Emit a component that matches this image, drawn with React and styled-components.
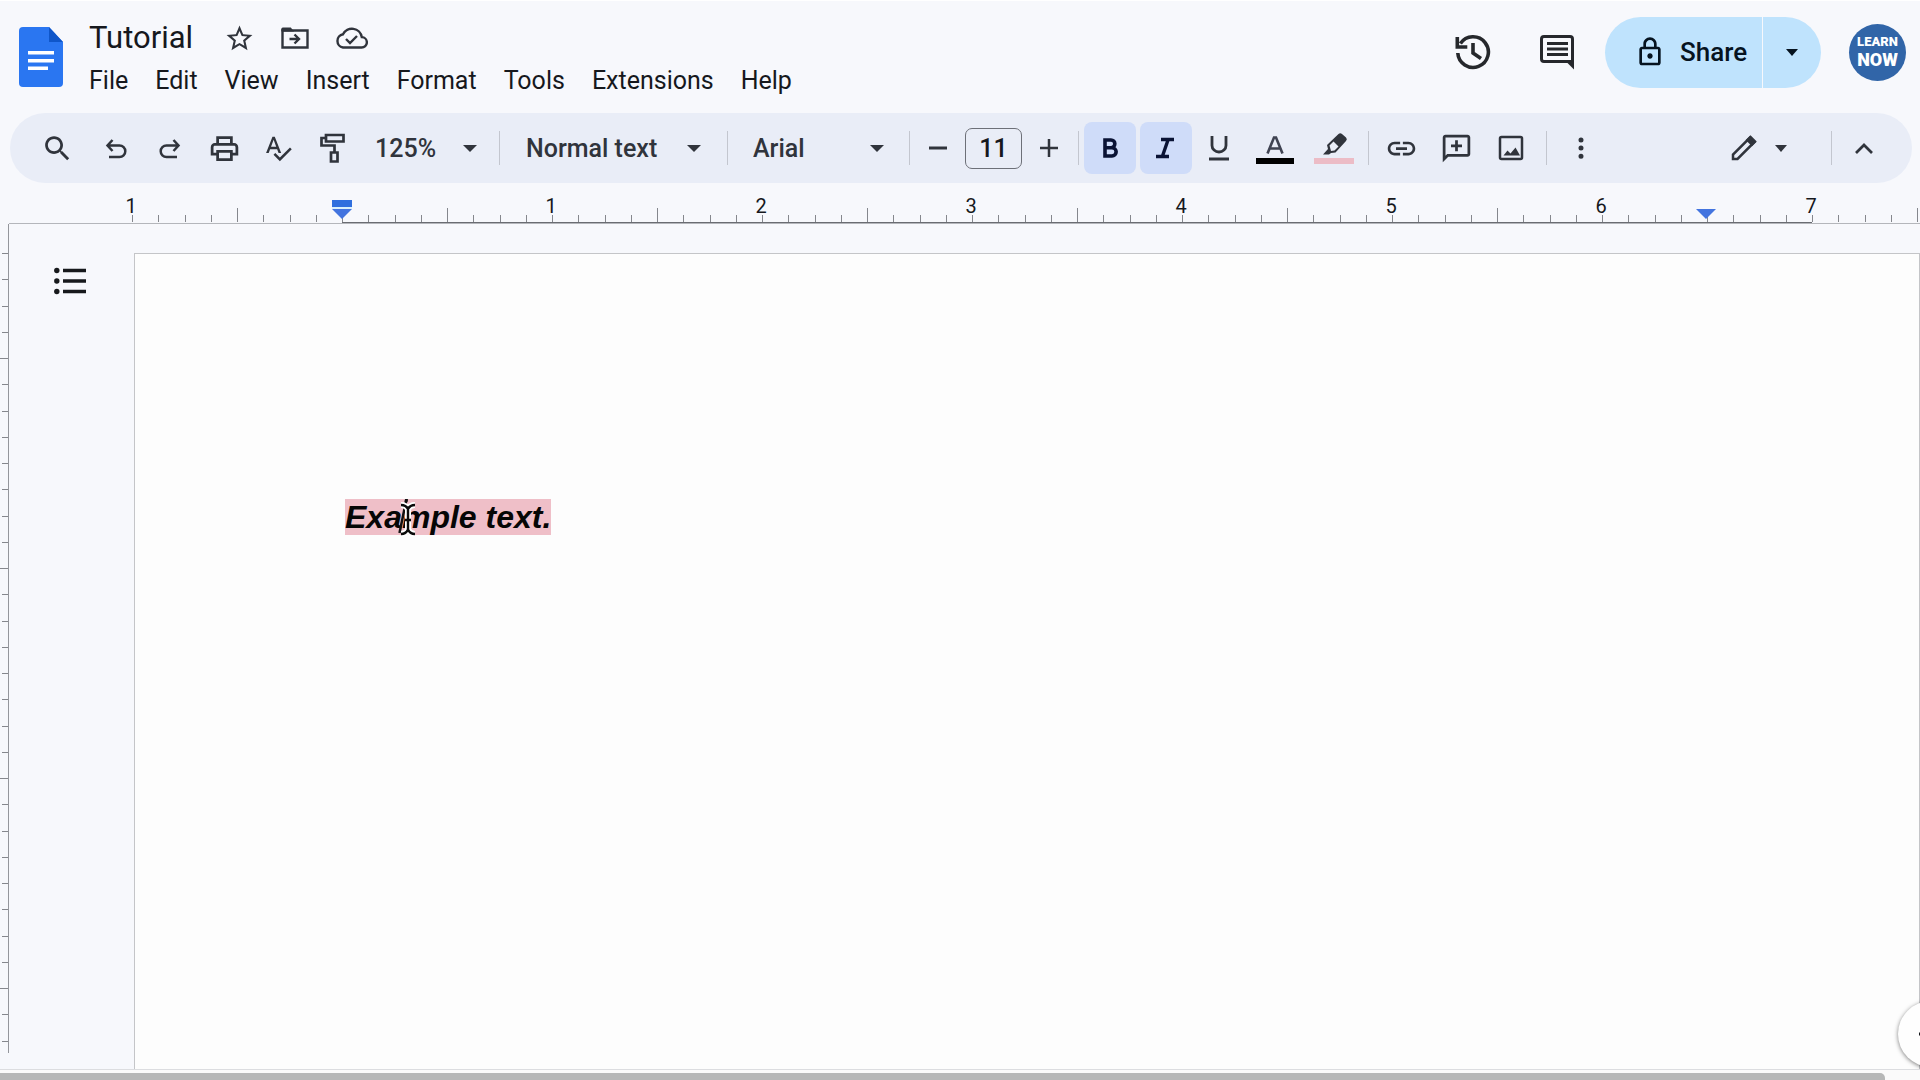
import React from 'react';
import styled, { createGlobalStyle, css } from 'styled-components';

const ink = '#30343c';
const uiFont = "Roboto, 'Noto Sans', sans-serif";

const GlobalStyle = createGlobalStyle`
  *, *::before, *::after { box-sizing: border-box; }
  html, body { margin: 0; height: 100%; background: #f7f8fc; }
  body { font-family: ${uiFont}; color: #16181d; overflow: hidden; }
  button, input, select { font: inherit; color: inherit; }
`;

const Screen = styled.div`
  display: flex;
  flex-direction: column;
  height: 100vh;
  border-top: 1px solid #fff;
  overflow: hidden;
`;

/* ---------- header ---------- */

const Header = styled.header`
  display: flex;
  justify-content: space-between;
  height: 112px;
  padding: 0 14px 0 19px;
`;

const Brand = styled.div`
  display: flex;
  gap: 26px;
`;

const LogoLink = styled.a`
  display: block;
  height: 60px;
  margin-top: 26px;
`;

const TitleColumn = styled.div`
  display: flex;
  flex-direction: column;
  padding-top: 16px;
`;

const TitleRow = styled.div`
  display: flex;
  align-items: center;
  height: 42px;
`;

const TitleInput = styled.input`
  width: 122px;
  padding: 0;
  border: 0;
  background: none;
  outline: none;
  font-size: 31px;
  line-height: 40px;
`;

const PlainButton = styled.button`
  display: flex;
  align-items: center;
  justify-content: center;
  flex: none;
  padding: 0;
  border: 0;
  background: none;
  cursor: pointer;
`;

const TitleButton = styled(PlainButton)`
  width: 56px;
  height: 40px;
  color: ${ink};
`;

const MenuBar = styled.nav`
  display: flex;
  gap: 27px;
  height: 44px;
`;

const MenuButton = styled(PlainButton)`
  font-size: 25px;
  line-height: 44px;
`;

const HeaderActions = styled.div`
  display: flex;
  align-items: center;
  height: 102px;
`;

const HeaderIconButton = styled(PlainButton)`
  width: 84px;
  height: 70px;
  color: #26282c;
`;

const ShareGroup = styled.div`
  display: flex;
  gap: 1px;
  height: 71px;
  margin: 0 28px 0 6px;
`;

const ShareButton = styled(PlainButton)`
  justify-content: flex-start;
  gap: 14px;
  width: 157px;
  padding-left: 29px;
  border-radius: 36px 0 0 36px;
  background: #bfe3fd;
  color: #06131f;
  font-size: 26px;
  font-weight: 500;
`;

const ShareMenuButton = styled(PlainButton)`
  width: 58px;
  border-radius: 0 36px 36px 0;
  background: #bfe3fd;
  color: #06131f;
`;

const Avatar = styled(PlainButton)`
  flex-direction: column;
  width: 57px;
  height: 57px;
  border-radius: 50%;
  background: #3165a8;
  color: #fff;
  font-weight: 900;
`;

const AvatarLine = styled.span`
  font-size: ${(p) => (p.$large ? 18 : 13)}px;
  line-height: ${(p) => (p.$large ? 20 : 16)}px;
`;

/* ---------- toolbar ---------- */

const Toolbar = styled.div`
  display: flex;
  align-items: center;
  flex: none;
  height: 70px;
  margin: 0 8px 0 10px;
  padding: 0 21px 0 20px;
  border-radius: 35px;
  background: #e9edf7;
  color: ${ink};
`;

const ToolGroup = styled.div`
  display: flex;
  align-items: center;
  gap: ${(p) => p.$gap || 0}px;
  padding: ${(p) => p.$pad || 0};
`;

const ToolButton = styled(PlainButton)`
  width: ${(p) => p.$width || 54}px;
  height: 52px;
  border-radius: 8px;
  ${(p) =>
    p.$active &&
    css`
      background: #cfdcf9;
      color: #0a1335;
    `}
`;

const Divider = styled.span`
  flex: none;
  width: 1px;
  height: 34px;
  background: #c3c6cf;
`;

const SelectBox = styled.label`
  display: grid;
  grid-template-columns: 1fr auto;
  align-items: center;
  width: ${(p) => p.$width}px;
  padding: ${(p) => p.$pad || '0 26px'};
`;

const SelectControl = styled.select`
  grid-area: 1 / 1 / 2 / 3;
  width: 100%;
  height: 40px;
  padding: 0;
  border: 0;
  background: none;
  outline: none;
  appearance: none;
  font-size: 25px;
  font-weight: 500;
`;

const SelectCaret = styled.span`
  display: flex;
  grid-area: 1 / 2 / 2 / 3;
  pointer-events: none;
`;

const SizeInput = styled.input`
  width: 57px;
  height: 41px;
  padding: 0;
  border: 1px solid #6d7078;
  border-radius: 7px;
  background: none;
  color: #16181d;
  font-size: 25px;
  font-weight: 500;
  text-align: center;
  outline: none;
`;

const ToolbarEnd = styled.div`
  display: flex;
  align-items: center;
  margin-left: auto;
`;

const ModeButton = styled(PlainButton)`
  gap: 17px;
  height: 52px;
  margin-right: 44px;
`;

/* ---------- rulers ---------- */

const HorizontalRuler = styled.div`
  display: flex;
  flex: none;
  height: 41px;
  margin-left: 9px;
  padding-left: 123px;
  border-bottom: 1px solid #b4b6bb;
  overflow: hidden;
`;

const RulerInch = styled.div`
  position: relative;
  display: grid;
  grid-template-columns: repeat(8, 1fr);
  grid-template-rows: 14px minmax(0, 1fr);
  flex: none;
  align-items: end;
  width: 210px;
  height: 40px;
  padding-top: 16px;
  border-bottom: 1px solid ${(p) => (p.$margin ? 'transparent' : '#6a6c72')};
`;

const RulerNumber = styled.span`
  grid-column: 1 / -1;
  width: 20px;
  margin-left: -11px;
  font-size: 20px;
  line-height: 14px;
  text-align: center;
`;

const Tick = styled.i`
  grid-row: 2;
  width: 1px;
  height: ${(p) => (p.$tall ? 14 : 7)}px;
  background: #85878d;
`;

const IndentMarker = styled.span`
  position: absolute;
  bottom: 3px;
  left: ${(p) => (p.$half ? 'calc(50% - 11px)' : '-10px')};
  display: flex;
`;

const Workspace = styled.main`
  position: relative;
  display: flex;
  flex: 1;
  min-height: 0;
  overflow: hidden;
`;

const VerticalRuler = styled.div`
  display: flex;
  flex-direction: column;
  flex: none;
  width: 9px;
  margin-bottom: 16px;
  padding-top: 29px;
  border-right: 1px solid #94969c;
  overflow: hidden;
`;

const VerticalInch = styled.div`
  display: grid;
  grid-template-rows: repeat(8, 1fr);
  justify-items: end;
  flex: none;
  height: 210px;
`;

const SideTick = styled.i`
  width: ${(p) => (p.$tall ? 9 : 7)}px;
  height: 1px;
  background: #85878d;
`;

/* ---------- document ---------- */

const OutlineRail = styled.aside`
  display: flex;
  justify-content: center;
  align-items: flex-start;
  flex: none;
  width: 125px;
  padding: 37px 3px 0 0;
`;

const OutlineButton = styled(PlainButton)`
  width: 52px;
  height: 40px;
`;

const Page = styled.article`
  flex: 1;
  margin-top: 29px;
  padding: 245px 210px 0;
  border: 1px solid #c4c5c8;
  border-bottom: 0;
  background: #fdfdfd;
`;

const Paragraph = styled.p`
  margin: 0;
  font: italic 700 32px/37px 'Liberation Sans', Arial, sans-serif;
  color: #060606;
`;

const Highlight = styled.mark`
  position: relative;
  background: #efbfc8;
  color: inherit;
`;

const PointerOverlay = styled.span`
  position: absolute;
  top: 0;
  left: 50px;
  display: flex;
`;

const ExploreButton = styled(PlainButton)`
  position: absolute;
  right: -44px;
  bottom: 2px;
  width: 66px;
  height: 66px;
  border-radius: 50%;
  background: #fefefe;
  box-shadow: 0 1px 4px rgba(0, 0, 0, 0.5);
`;

const ScrollTrack = styled.div`
  flex: none;
  height: 11px;
  padding: 3px 35px 0 0;
  border-top: 1px solid #dcdde0;
  background: #fafafa;
  overflow: hidden;
`;

const ScrollThumb = styled.div`
  height: 12px;
  border-radius: 0 5px 0 0;
  background: #b6b7b7;
`;

/* ---------- drawings ---------- */

const icons = {
  star: 'M22 9.24l-7.19-.62L12 2 9.19 8.63 2 9.24l5.46 4.73L5.82 21 12 17.27 18.18 21l-1.63-7.03L22 9.24zM12 15.4l-3.76 2.27 1-4.28-3.32-2.88 4.38-.38L12 6.1l1.71 4.04 4.38.38-3.32 2.88 1 4.28L12 15.4z',
  search: 'M15.5 14h-.79l-.28-.27C15.41 12.59 16 11.11 16 9.5 16 5.91 13.09 3 9.5 3S3 5.91 3 9.5 5.91 16 9.5 16c1.61 0 3.09-.59 4.23-1.57l.28.28v.79l5 4.99L20.49 19l-4.99-5zm-6 0C7.01 14 5 11.99 5 9.5S7.01 5 9.5 5 14 7.01 14 9.5 11.99 14 9.5 14z',
  print: 'M19 8h-1V3H6v5H5c-1.66 0-3 1.34-3 3v6h4v4h12v-4h4v-6c0-1.66-1.34-3-3-3zM8 5h8v3H8V5zm8 12v2H8v-4h8v2zm2-2v-2H6v2H4v-4c0-.55.45-1 1-1h14c.55 0 1 .45 1 1v4h-2z',
  spell: 'M12.45 16h2.09L9.43 3H7.57L2.46 16h2.09l1.12-3h5.64l1.14 3zm-6.02-5L8.5 5.48 10.57 11H6.43zm15.16.59l-8.09 8.09L9.83 16l-1.41 1.41 5.09 5.09L23 13l-1.41-1.41z',
  link: 'M3.9 12c0-1.71 1.39-3.1 3.1-3.1h4V7H7c-2.76 0-5 2.24-5 5s2.24 5 5 5h4v-1.9H7c-1.71 0-3.1-1.39-3.1-3.1zM8 13h8v-2H8v2zm9-6h-4v1.9h4c1.71 0 3.1 1.39 3.1 3.1s-1.39 3.1-3.1 3.1h-4V17h4c2.76 0 5-2.24 5-5s-2.24-5-5-5z',
  addComment: 'M20 2H4c-1.1 0-2 .9-2 2v18l4-4h14c1.1 0 2-.9 2-2V4c0-1.1-.9-2-2-2zm0 14H5.2L4 17.2V4h16v12zm-9-2h2v-3h3V9h-3V6h-2v3H8v2h3v3z',
  more: 'M12 7.5a2 2 0 1 0 0-4 2 2 0 0 0 0 4zm0 6.5a2 2 0 1 0 0-4 2 2 0 0 0 0 4zm0 6.5a2 2 0 1 0 0-4 2 2 0 0 0 0 4z',
  lock: 'M18 8h-1V6c0-2.76-2.24-5-5-5S7 3.24 7 6v2H6c-1.1 0-2 .9-2 2v10c0 1.1.9 2 2 2h12c1.1 0 2-.9 2-2V10c0-1.1-.9-2-2-2zM9 6c0-1.66 1.34-3 3-3s3 1.34 3 3v2H9V6zm9 14H6V10h12v10zm-6-3c1.1 0 2-.9 2-2s-.9-2-2-2-2 .9-2 2 .9 2 2 2z',
};

function Icon({ name, size }) {
  return (
    <svg width={size} height={size} viewBox="0 0 24 24" fill="currentColor" aria-hidden="true">
      <path d={icons[name]} />
    </svg>
  );
}

function Line({ size = 30, width = 2.5, children }) {
  return (
    <svg width={size} height={size} viewBox={`0 0 ${size} ${size}`} fill="none" stroke="currentColor" strokeWidth={width} aria-hidden="true">
      {children}
    </svg>
  );
}

const Caret = ({ width = 14 }) => (
  <svg width={width} height="7" viewBox="0 0 14 7" preserveAspectRatio="none" fill="currentColor" aria-hidden="true">
    <path d="M0 0h14L7 7z" />
  </svg>
);

const DocsLogo = () => (
  <svg width="44" height="60" viewBox="0 0 44 60" aria-hidden="true">
    <path d="M4 0h26l14 15v41a4 4 0 0 1-4 4H4a4 4 0 0 1-4-4V4a4 4 0 0 1 4-4z" fill="#2a76f1" />
    <path d="M30 0l14 15H30z" fill="#0f56c9" />
    <path d="M9 24h26v3.5H9zM9 32h26v3.5H9zM9 39.5h20V43H9z" fill="#fff" />
  </svg>
);

const FolderMoveIcon = () => (
  <Line size={30} width={2.4}>
    <path d="M2.5 7.500v17h25v-17z" />
    <path d="M1.300 8.500V6q0-1.500 1.500-1.500h8l3.200 4z" fill="currentColor" stroke="none" />
    <path d="M9.500 16h8.500M14.500 11.500l4.500 4.500-4.500 4.500" />
  </Line>
);

const CloudIcon = () => (
  <Line size={34} width={2.4}>
    <path d="M9 26.500h18.500a5.200 5.200 0 0 0 .300-10.400A10 10 0 0 0 9 13.300 6.700 6.700 0 0 0 9 26.500z" />
    <path d="M12 18l4 4 7-7" />
  </Line>
);

const HistoryIcon = () => (
  <Line size={36} width={3.6}>
    <path d="M2.8 19a15.3 15.3 0 1 0 2.6-9.5" />
    <path d="M2.3 3v10h10" />
    <path d="M18 9v10l8 5.5" />
  </Line>
);

const CommentIcon = () => (
  <Line size={36} width={3}>
    <path d="M2.500 5q0-2.500 2.500-2.500h26q2.500 0 2.500 2.500v22.500h-28.500q-2.500 0-2.500-2.500z" />
    <path d="M35 27v8.500l-8-8z" fill="currentColor" stroke="none" />
    <path d="M8 9.500h21M8 15h21M8 20.500h21" />
  </Line>
);

const UndoIcon = ({ flip }) => (
  <Line size={24} width={2.5}>
    <g transform={flip ? 'translate(24 0) scale(-1 1)' : undefined}>
      <path d="M8.5 4L3.500 9.500l5 5.500M4 9.500h11.500a5.800 5.800 0 0 1 0 11.600H5" />
    </g>
  </Line>
);

const PaintIcon = () => (
  <Line size={32} width={2.7}>
    <path d="M10 3h17.500v6.500H10zM10 6H5.500v7.500h13V20M15 20.500h6.500v9H15z" />
  </Line>
);

const ImageIcon = () => (
  <Line size={28} width={2.5}>
    <rect x="3" y="3" width="22" height="22" rx="1.500" />
    <path d="M6.500 21.500l4-5 3 3 5-6 4.500 8z" fill="currentColor" stroke="none" />
  </Line>
);

const BoldIcon = () => (
  <Line size={24} width={3.6}>
    <path d="M7 4h6a3.8 3.8 0 0 1 0 7.7H7zM7 11.7h7a4.1 4.1 0 0 1 0 8.300H7z" />
  </Line>
);

const ItalicIcon = () => (
  <Line size={24} width={3.4}>
    <path d="M7 3.500h13M2 20.500h13M14 4L8.500 20" />
  </Line>
);

const UnderlineIcon = () => (
  <Line size={26} width={2.8}>
    <path d="M6 1v9.500a7 6.500 0 0 0 14 0V1M3 24h20" />
  </Line>
);

const TextColorIcon = () => (
  <svg width="38" height="32" viewBox="0 0 38 32" aria-hidden="true">
    <path d="M11.5 21.500L18 5.500h2L26.500 21.500M14 16.500h10" fill="none" stroke="#3f4352" strokeWidth="2.600" />
    <path d="M0 26h38v6H0z" fill="#000" />
  </svg>
);

const HighlightIcon = () => (
  <svg width="40" height="32" viewBox="0 0 40 32" aria-hidden="true">
    <path d="M9 22.500l5-5.500-1-4L24.500 2a2.500 2.500 0 0 1 3.500 0l4 3.500a2.500 2.500 0 0 1 0 3.500L21.500 20.500l-4.500.500-2 1.500z" fill={ink} />
    <path d="M15.500 13.500l4-4 5 5-4 4-3.500.500z" fill="#e9edf7" />
    <path d="M0 26h40v6H0z" fill="#ecbcc6" />
  </svg>
);

const PencilIcon = () => (
  <Line size={28} width={2.5}>
    <path d="M3 25v-4.500L20 3.500l4.500 4.500-17 17z" />
    <path d="M17.500 6l4.500 4.500 3-3L20.500 3z" fill="currentColor" />
  </Line>
);

const ListIcon = () => (
  <svg width="32" height="28" viewBox="0 0 32 28" fill="#17191c" aria-hidden="true">
    <circle cx="2.8" cy="3.500" r="2.700" />
    <circle cx="2.800" cy="14" r="2.700" />
    <circle cx="2.800" cy="24.500" r="2.700" />
    <path d="M9 1.800h23v3.500H9zM9 12.300h23v3.500H9zM9 22.800h23v3.500H9z" />
  </svg>
);

const TextPointer = () => (
  <svg width="26" height="38" viewBox="0 0 26 38" fill="none" aria-hidden="true">
    <path d="M11.500 0L4.500 34" stroke="#111" strokeWidth="2.500" />
    <path d="M6 6q5 0 7 4q2-4 7-4M13 10v20M6 35q5 0 7-4.500q2 4.500 7 4.500M10 21h6" stroke="#fff" strokeWidth="6" />
    <path d="M6 6q5 0 7 4q2-4 7-4M13 10v20M6 35q5 0 7-4.500q2 4.500 7 4.500M10 21h6" stroke="#0b0b0b" strokeWidth="2.400" />
    <path d="M11.500 0L11 3" stroke="#111" strokeWidth="3" />
  </svg>
);

const LeftIndent = () => (
  <svg width="20" height="19" viewBox="0 0 20 19" aria-hidden="true">
    <path d="M0 0h20v7H0z" fill="#2f6fde" />
    <path d="M0 7h20v2H0z" fill="#d9f0fc" />
    <path d="M0 9h20L10 19z" fill="#4374df" />
  </svg>
);

const RightIndent = () => (
  <svg width="20" height="10" viewBox="0 0 20 10" aria-hidden="true">
    <path d="M0 0h20L10 10z" fill="#4374df" />
  </svg>
);

/* ---------- page ---------- */

const menus = ['File', 'Edit', 'View', 'Insert', 'Format', 'Tools', 'Extensions', 'Help'];
const eighths = [0, 1, 2, 3, 4, 5, 6, 7];
const inches = [
  { label: '1', margin: true },
  { label: '', marker: 'left' },
  { label: '1' },
  { label: '2' },
  { label: '3' },
  { label: '4' },
  { label: '5' },
  { label: '6', marker: 'right' },
  { label: '7', margin: true },
];

function Select({ label, width, pad, value }) {
  return (
    <SelectBox $width={width} $pad={pad}>
      <SelectControl aria-label={label} defaultValue={value}>
        <option>{value}</option>
      </SelectControl>
      <SelectCaret>
        <Caret />
      </SelectCaret>
    </SelectBox>
  );
}

export default function App() {
  return (
    <>
      <GlobalStyle />
      <Screen>
        <Header>
          <Brand>
            <LogoLink href="#" aria-label="Docs home">
              <DocsLogo />
            </LogoLink>
            <TitleColumn>
              <TitleRow>
                <TitleInput aria-label="Document title" defaultValue="Tutorial" />
                <TitleButton aria-label="Star"><Icon name="star" size={31} /></TitleButton>
                <TitleButton aria-label="Move"><FolderMoveIcon /></TitleButton>
                <TitleButton aria-label="Saved to cloud"><CloudIcon /></TitleButton>
              </TitleRow>
              <MenuBar>
                {menus.map((m) => (
                  <MenuButton key={m}>{m}</MenuButton>
                ))}
              </MenuBar>
            </TitleColumn>
          </Brand>
          <HeaderActions>
            <HeaderIconButton aria-label="Version history"><HistoryIcon /></HeaderIconButton>
            <HeaderIconButton aria-label="Comments"><CommentIcon /></HeaderIconButton>
            <ShareGroup>
              <ShareButton>
                <Icon name="lock" size={32} />
                Share
              </ShareButton>
              <ShareMenuButton aria-label="Share options"><Caret width={12} /></ShareMenuButton>
            </ShareGroup>
            <Avatar aria-label="Account">
              <AvatarLine>LEARN</AvatarLine>
              <AvatarLine $large>NOW</AvatarLine>
            </Avatar>
          </HeaderActions>
        </Header>

        <Toolbar role="toolbar">
          <ToolGroup $pad="0 5px 0 0">
            <ToolButton aria-label="Search menus"><Icon name="search" size={33} /></ToolButton>
          </ToolGroup>
          <ToolGroup>
            <ToolButton aria-label="Undo"><UndoIcon /></ToolButton>
            <ToolButton aria-label="Redo"><UndoIcon flip /></ToolButton>
            <ToolButton aria-label="Print"><Icon name="print" size={33} /></ToolButton>
            <ToolButton aria-label="Spelling check"><Icon name="spell" size={30} /></ToolButton>
            <ToolButton aria-label="Paint format"><PaintIcon /></ToolButton>
          </ToolGroup>
          <Select label="Zoom" width={140} pad="0 22px 0 16px" value="125%" />
          <Divider />
          <Select label="Styles" width={227} value="Normal text" />
          <Divider />
          <Select label="Font" width={181} pad="0 25px" value="Arial" />
          <Divider />
          <ToolGroup $pad="0 2px 0 1px">
            <ToolButton aria-label="Decrease font size"><Line size={18} width={3}><path d="M0 9h18" /></Line></ToolButton>
            <SizeInput aria-label="Font size" defaultValue="11" />
            <ToolButton aria-label="Increase font size"><Line size={18} width={2.5}><path d="M0 9h18M9 0v18" /></Line></ToolButton>
          </ToolGroup>
          <Divider />
          <ToolGroup $gap={4} $pad="0 8px 0 5px">
            <ToolButton $width={52} $active aria-pressed="true" aria-label="Bold"><BoldIcon /></ToolButton>
            <ToolButton $width={52} $active aria-pressed="true" aria-label="Italic"><ItalicIcon /></ToolButton>
            <ToolButton $width={46} aria-label="Underline"><UnderlineIcon /></ToolButton>
            <ToolButton $width={58} aria-label="Text color"><TextColorIcon /></ToolButton>
            <ToolButton $width={52} aria-label="Highlight color"><HighlightIcon /></ToolButton>
          </ToolGroup>
          <Divider />
          <ToolGroup $gap={1} $pad="0 8px 0 5px">
            <ToolButton aria-label="Insert link"><Icon name="link" size={33} /></ToolButton>
            <ToolButton aria-label="Add comment"><Icon name="addComment" size={33} /></ToolButton>
            <ToolButton aria-label="Insert image"><ImageIcon /></ToolButton>
          </ToolGroup>
          <Divider />
          <ToolGroup $pad="0 0 0 7px">
            <ToolButton aria-label="More"><Icon name="more" size={30} /></ToolButton>
          </ToolGroup>
          <ToolbarEnd>
            <ModeButton aria-label="Editing mode">
              <PencilIcon />
              <Caret width={12} />
            </ModeButton>
            <Divider />
            <ToolGroup $pad="0 0 0 5px">
              <ToolButton aria-label="Hide the menus"><Line size={18} width={2.7}><path d="M1 14l8-8 8 8" /></Line></ToolButton>
            </ToolGroup>
          </ToolbarEnd>
        </Toolbar>

        <HorizontalRuler>
          {inches.map((inch, n) => (
            <RulerInch key={n} $margin={inch.margin}>
              <RulerNumber>{inch.label}</RulerNumber>
              {eighths.map((e) => (
                <Tick key={e} $tall={e === 4 && inch.marker !== 'right'} />
              ))}
              {inch.marker === 'left' && <IndentMarker><LeftIndent /></IndentMarker>}
              {inch.marker === 'right' && <IndentMarker $half><RightIndent /></IndentMarker>}
            </RulerInch>
          ))}
        </HorizontalRuler>

        <Workspace>
          <VerticalRuler>
            {[0, 1, 2, 3].map((n) => (
              <VerticalInch key={n}>
                {eighths.map((e) => (
                  <SideTick key={e} $tall={e === 4} />
                ))}
              </VerticalInch>
            ))}
          </VerticalRuler>
          <OutlineRail>
            <OutlineButton aria-label="Show outline"><ListIcon /></OutlineButton>
          </OutlineRail>
          <Page>
            <Paragraph>
              <Highlight>
                Example text.
                <PointerOverlay><TextPointer /></PointerOverlay>
              </Highlight>
            </Paragraph>
          </Page>
          <ExploreButton aria-label="Explore">
            <Line size={24} width={3}><path d="M0 12h24M12 0v24" /></Line>
          </ExploreButton>
        </Workspace>
        <ScrollTrack>
          <ScrollThumb />
        </ScrollTrack>
      </Screen>
    </>
  );
}
